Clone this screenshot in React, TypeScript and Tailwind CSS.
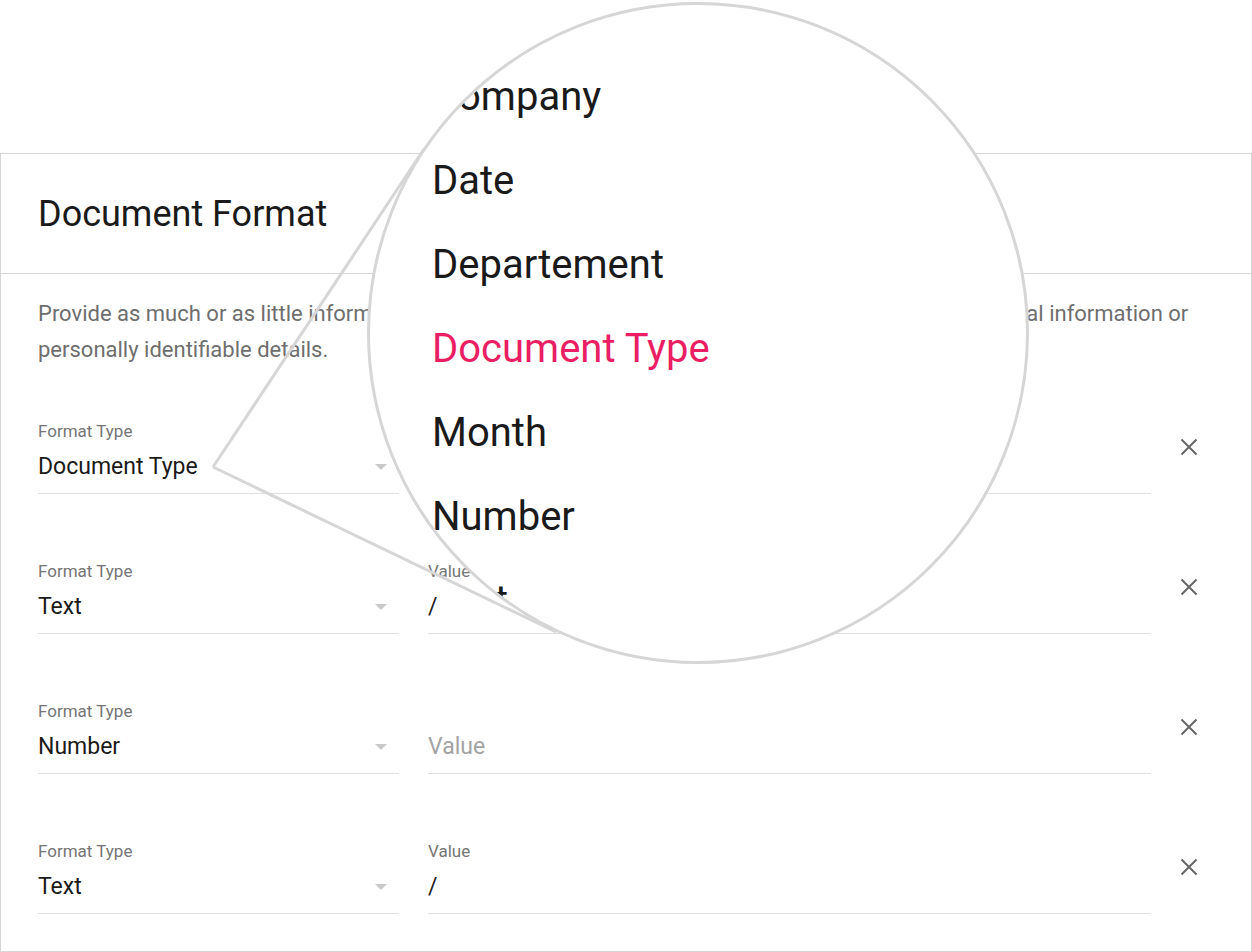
import React from "react";

type Row = { type: string; label?: string; value?: string; placeholder?: string };

const rows: Row[] = [
  { type: "Document Type", label: "Value", value: "/" },
  { type: "Text", label: "Value", value: "/" },
  { type: "Number", placeholder: "Value" },
  { type: "Text", label: "Value", value: "/" },
];

const options = ["Company", "Date", "Departement", "Document Type", "Month", "Number", "Text"];

function Arrow() {
  return (
    <svg width="12" height="6" viewBox="0 0 12 6" className="shrink-0">
      <polygon points="0,0 12,0 6,6" fill="#c9c9c9" />
    </svg>
  );
}

function CloseIcon() {
  return (
    <svg width="18" height="18" viewBox="0 0 18 18">
      <path d="M1.5 1.5 16.5 16.5 M16.5 1.5 1.5 16.5" stroke="#666" strokeWidth="2" fill="none" />
    </svg>
  );
}

function FormatRow({ row }: { row: Row }) {
  return (
    <div className="flex items-start h-[140px]">
      {/* select */}
      <div className="w-[361px] border-b border-[#e0e0e0]">
        <div className="h-4 text-[17px] leading-4 text-[#757575]">Format Type</div>
        <div className="mt-[13px] h-[30px] mb-[11px] flex items-center justify-between pr-[12px]">
          <span className="text-[23px] text-[#1a1a1a]">{row.type}</span>
          <Arrow />
        </div>
      </div>
      {/* value */}
      <div className="ml-[29px] w-[723px] border-b border-[#e0e0e0]">
        <div className="h-4 text-[17px] leading-4 text-[#757575]">{row.label ?? ""}</div>
        <div className="mt-[13px] h-[30px] mb-[11px] flex items-center">
          {row.placeholder ? (
            <span className="text-[23px] text-[#a3a3a3]">{row.placeholder}</span>
          ) : (
            <span className="text-[23px] text-[#1a1a1a]">{row.value}</span>
          )}
        </div>
      </div>
      <div className="w-[76px] flex justify-center mt-[15px]">
        <CloseIcon />
      </div>
    </div>
  );
}

export default function App() {
  return (
    <div
      className="relative w-[1252px] h-[952px] bg-white overflow-hidden"
      style={{ fontFamily: "Roboto, 'Noto Sans', sans-serif" }}
    >
      <div className="pt-[153px]">
        <div className="h-[799px] border border-[#d6d6d6]">
          <div className="h-[120px] border-b border-[#d6d6d6] flex items-center px-[37px]">
            <h1 className="text-[36px] text-[#1a1a1a]">Document Format</h1>
          </div>
          <div className="pl-[37px] pt-[22px]">
            <p className="text-[22px] leading-[36px] text-[#6e6e6e]">
              <span className="block whitespace-nowrap">
                Provide as much or as little information as you would like. We will never sell, rent or share your personal information or
              </span>
              <span className="block whitespace-nowrap">personally identifiable details.</span>
            </p>
            <div className="mt-[55px]">
              {rows.map((r, i) => (
                <FormatRow key={i} row={r} />
              ))}
            </div>
          </div>
        </div>
      </div>

      {/* callout lines */}
      <svg className="absolute inset-0 pointer-events-none" width="1252" height="952">
        <line x1="213" y1="467" x2="424" y2="149" stroke="#d6d6d6" strokeWidth="3" />
        <line x1="213" y1="467" x2="556" y2="632" stroke="#d6d6d6" strokeWidth="3" />
      </svg>

      {/* magnifier */}
      <div className="absolute left-[367px] top-[2px] w-[662px] h-[662px] rounded-full bg-white border-[3px] border-[#d6d6d6] overflow-hidden">
        <div className="pt-[50px] pl-[62px]">
          {options.map((o) => (
            <div
              key={o}
              className={
                "h-[84px] leading-[84px] text-[40px] whitespace-nowrap " +
                (o === "Document Type" ? "text-[#e91e63]" : "text-[#1a1a1a]")
              }
            >
              {o}
            </div>
          ))}
        </div>
      </div>
    </div>
  );
}
